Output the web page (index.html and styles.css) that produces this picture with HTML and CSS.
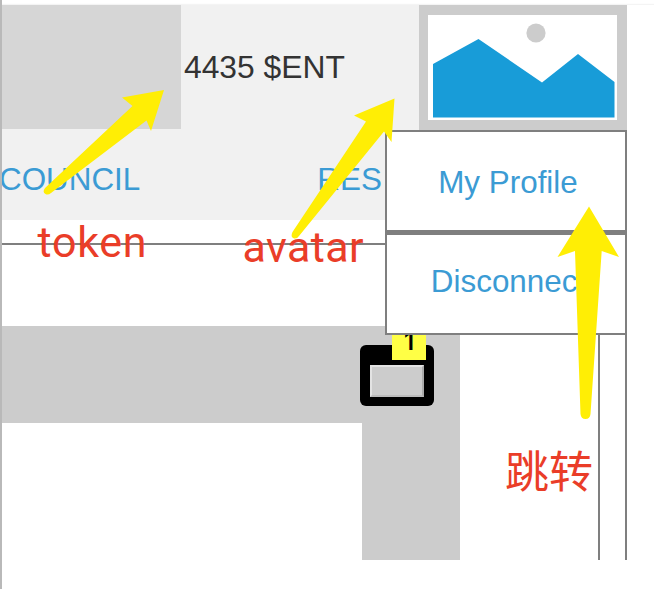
FILE: index.html
```html
<!DOCTYPE html>
<html lang="en">
<head>
<meta charset="utf-8">
<title>Profile menu</title>
<link rel="stylesheet" href="styles.css">
</head>
<body>
<div class="page">
  <header class="header">
    <div class="top">
      <div class="banner"></div>
      <div class="balance">4435 $ENT</div>
      <div class="avatar">
        <svg class="picture" viewBox="428 15 189 105">
          <circle cx="536" cy="33" r="9.6" fill="#ccc"/>
          <path d="M433 64L478.5 39L542 82.5L578 54L614.500 82V117.500H433Z" fill="#189cd8"/>
        </svg>
        <div class="menu">
          <a class="item">My Profile</a>
          <a class="item">Disconnect</a>
        </div>
      </div>
    </div>
    <nav class="nav"><a>COUNCIL</a><a>RES</a></nav>
  </header>
  <div class="rule"></div>
  <main class="main">
    <div class="blocks">
      <div class="band"></div>
      <div class="column"></div>
      <div class="widget"><div class="screen"></div><span class="badge">1</span></div>
    </div>
    <div class="rail"></div>
  </main>
  <svg class="notes" viewBox="0 0 654 589">
    <g fill="#ffee05">
      <path d="M164 90L122 97.500L132.500 106L45 188Q42 192 45.500 194Q48 195.500 51 193L146.500 120.500L151 131Z"/>
      <path d="M394.500 98.500L354 115.500L366 121.500L292.500 232Q290 237 294 238.500Q297 239 299 236L384 131.500L391.500 142Z"/>
      <path d="M589 206.500L557.500 257L575 251L580.500 414Q581 419 585.500 419Q590 419 590.500 414L601.700 251L619 257Z"/>
    </g>
    <g class="labels">
      <text x="37.500" y="257" textLength="109">token</text>
      <text x="242.500" y="262" textLength="121">avatar</text>
      <text class="cjk" x="505" y="487.500">跳转</text>
    </g>
  </svg>
</div>
</body>
</html>
```
FILE: styles.css
```css
* { box-sizing: border-box; }
body { margin: 0; background: #fff; font-family: "Liberation Sans", Arial, sans-serif; font-size: 31.4px; }
.page { position: relative; width: 654px; height: 589px; padding-top: 5px; border-left: 2px solid #b9b9b9; overflow: hidden; }
.header { height: 215px; background: linear-gradient(to right, #f1f1f1 417px, #fff 417px); box-shadow: 0 -1px 1px #f4f4f4; }
.top { display: grid; grid-template-columns: 179px 238px 208px; height: 125px; }
.banner { height: 124px; background: #d6d6d6; }
.balance { padding: 0 0 0 3px; line-height: 124px; font-size: 31.8px; color: #333; white-space: nowrap; }
.avatar { position: relative; padding: 10px 9px; background: #ccc; }
.picture { display: block; width: 189px; height: 105px; background: #fff; }
.menu { position: absolute; z-index: 2; top: 125px; right: 0; width: 242px; }
.item { display: block; height: 102px; padding: 2px 0 0 4px; border: 2px solid #7f7f7f; background: #fff; color: #3b9bd4; line-height: 98px; text-align: center; }
.item + .item { height: 103px; padding-top: 0; padding-left: 5px; border-top-width: 3px; line-height: 93px; }
.nav { display: flex; gap: 177px; height: 90px; margin-left: -3px; line-height: 99px; color: #3b9bd4; white-space: nowrap; }
.rule { width: 400px; height: 2px; margin-top: 23px; background: #7f7f7f; }
.main { display: flex; justify-content: space-between; width: 625px; height: 315px; }
.blocks { position: relative; width: 458px; padding-top: 81px; }
.band { height: 97px; background: #ccc; }
.column { width: 98px; height: 137px; margin-left: auto; background: #ccc; }
.widget { position: absolute; left: 358px; top: 100px; width: 74px; height: 61px; padding: 20px 10px 9px; border-radius: 6px; background: #000; }
.screen { height: 32px; border: 2px solid #e3e3e3; border-right-color: #aaa; border-bottom-color: #bbb; background: #ccc; }
.badge { position: absolute; left: 32px; top: -19px; width: 34px; height: 34px; background: #ffff45; color: #000; font: 600 24px/31px Inter, sans-serif; text-align: center; }
.rail { width: 29px; border: solid #7f7f7f; border-width: 0 2px; }
.notes { position: absolute; z-index: 3; top: 0; left: -2px; width: 654px; height: 589px; }
.labels { fill: #ea3d28; font-family: Roboto, sans-serif; font-size: 43px; }
.cjk { font-family: "Noto Sans CJK SC", sans-serif; font-size: 44px; }
```
